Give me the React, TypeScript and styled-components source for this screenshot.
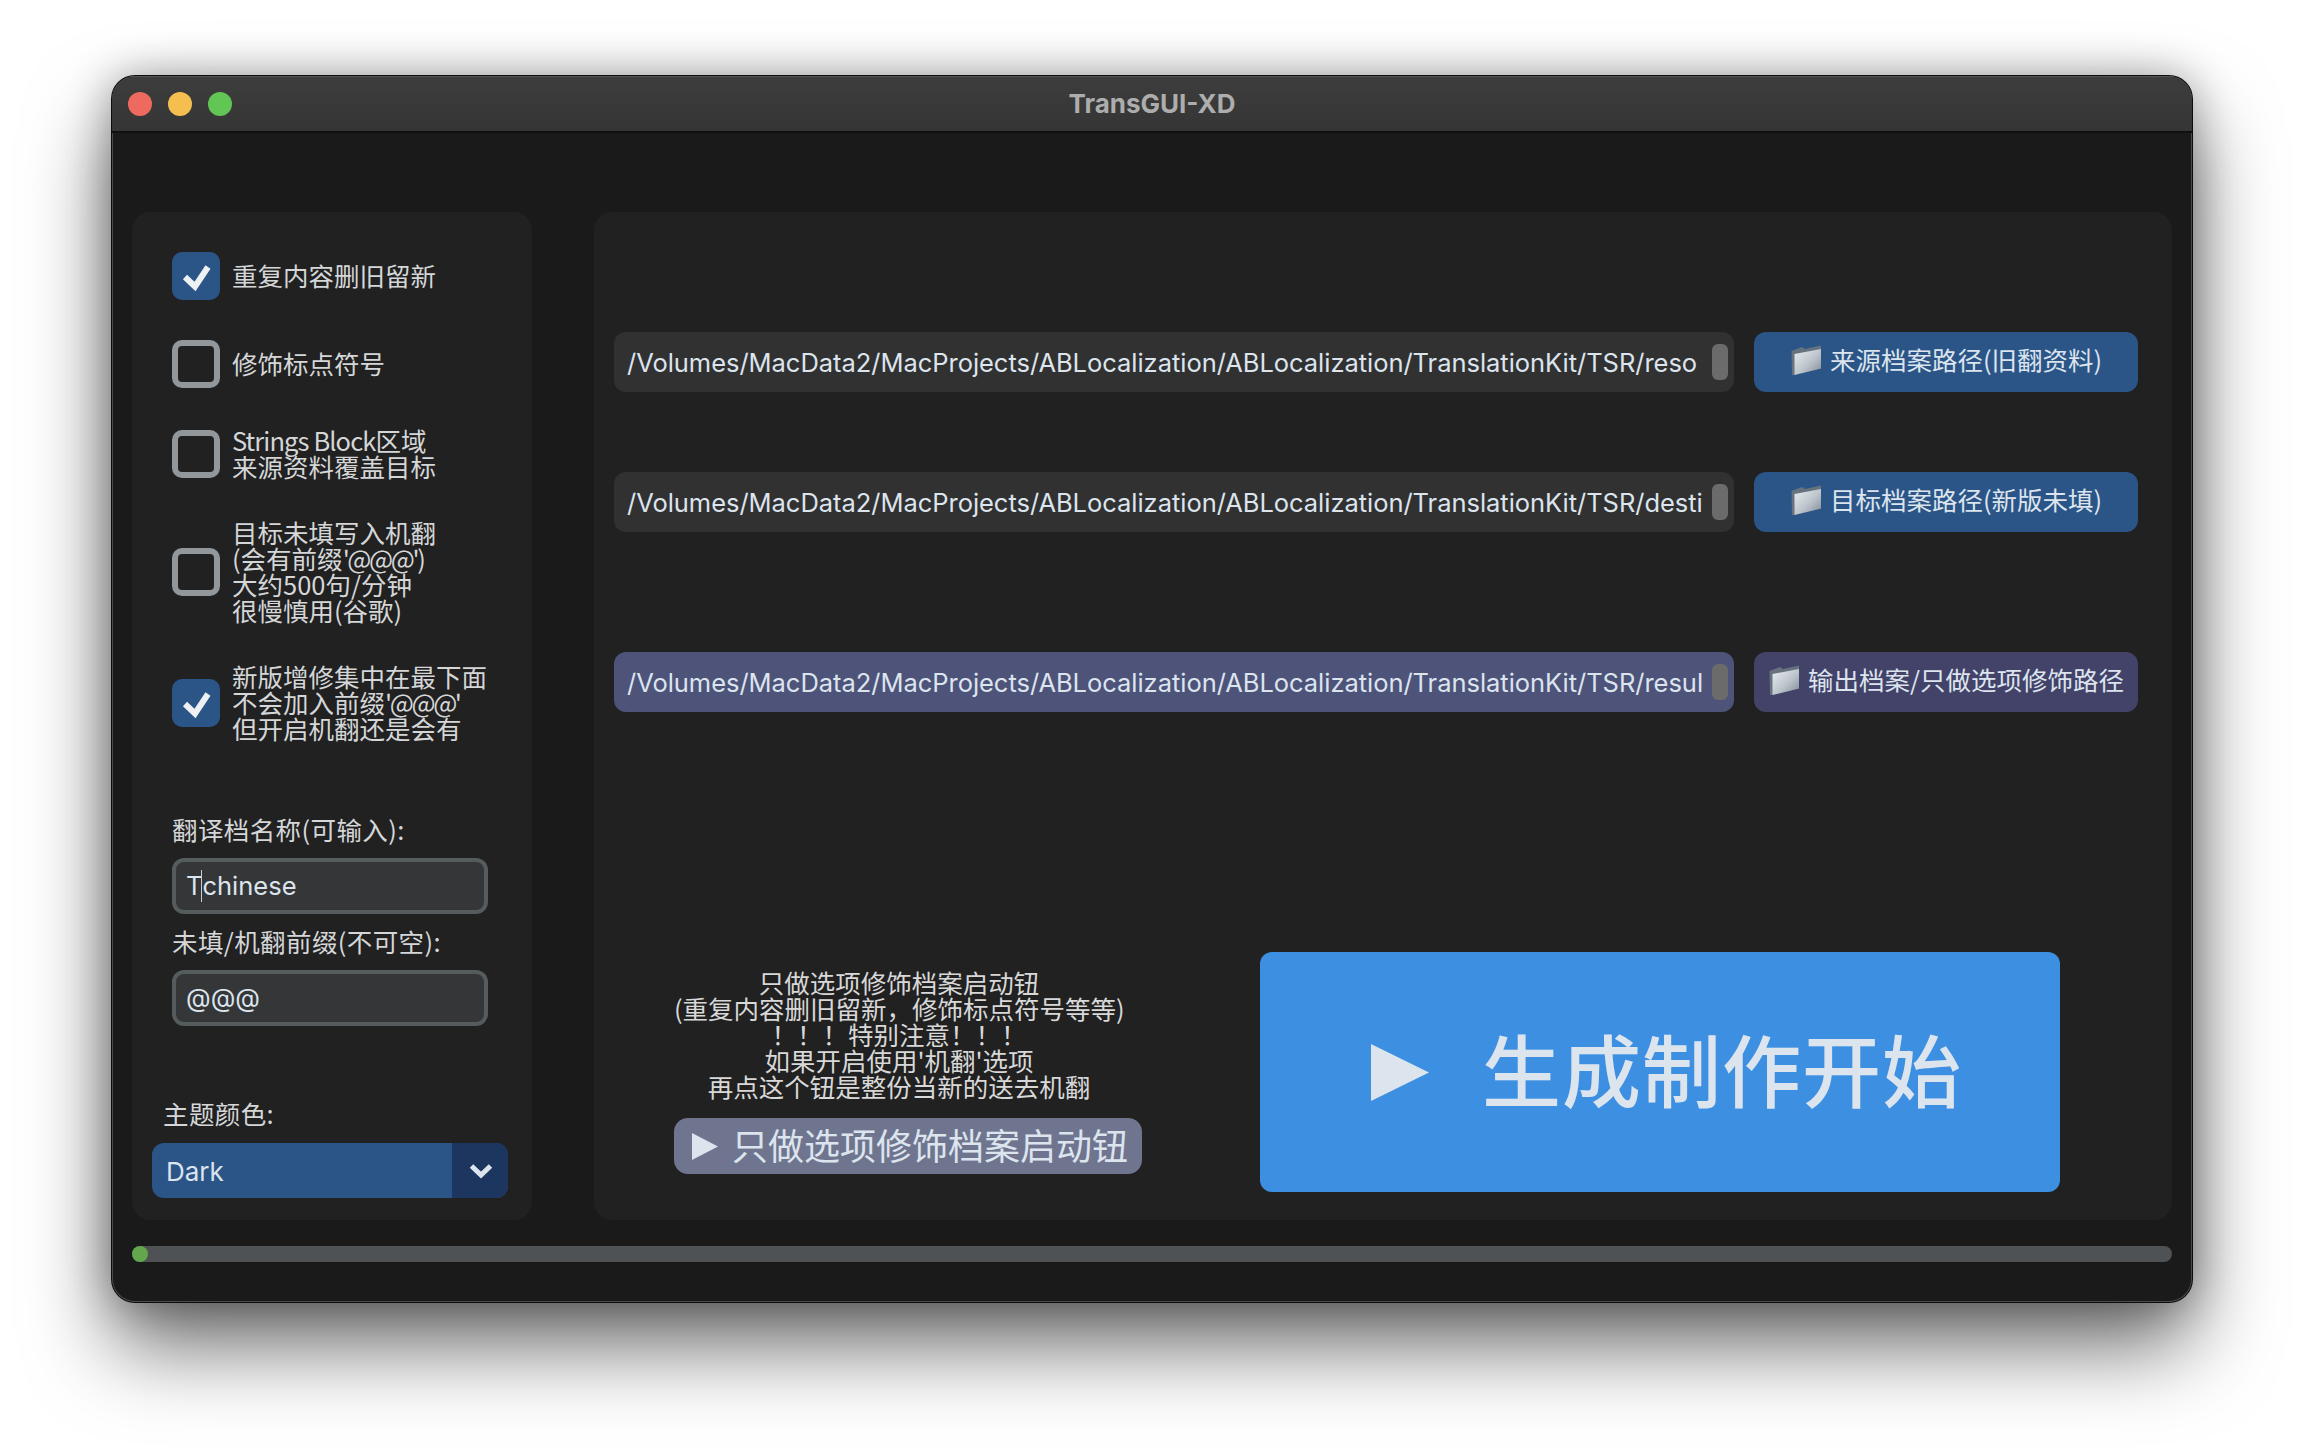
import React from "react";
import styled, { createGlobalStyle } from "styled-components";

const CJK = `"Noto Sans CJK SC", "Inter", sans-serif`;
const LATIN = `"Inter", "Noto Sans CJK SC", sans-serif`;

const GlobalStyle = createGlobalStyle`
  html, body {
    margin: 0;
    background: #ffffff;
  }
  * {
    box-sizing: border-box;
  }
`;

const Stage = styled.div`
  width: 2304px;
  height: 1450px;
  padding: 76px 112px 0;
  overflow: hidden;
  background: #ffffff;
`;

const Window = styled.div`
  width: 2080px;
  height: 1226px;
  border-radius: 23px;
  background: #1a1a1a;
  overflow: hidden;
  box-shadow: 0 0 0 1px #0c0c0c, inset 0 0 0 1px #4a4a4a, 0 44px 84px rgba(0, 0, 0, 0.58),
    0 0 44px rgba(0, 0, 0, 0.32);
`;

const TitleBar = styled.div`
  position: relative;
  height: 57px;
  padding-bottom: 2px;
  display: flex;
  align-items: center;
  justify-content: center;
  background: linear-gradient(#3c3d3c, #343534);
  border-top: 1px solid #555;
  border-bottom: 2px solid #0f0f0f;
`;

const Lights = styled.div`
  position: absolute;
  left: 16px;
  top: 15px;
  display: flex;
  gap: 16px;
`;

const Light = styled.span<{ $color: string }>`
  width: 24px;
  height: 24px;
  border-radius: 50%;
  background: ${(p) => p.$color};
`;

const Title = styled.div`
  font-family: ${LATIN};
  font-size: 26px;
  font-weight: 700;
  color: #adadad;
`;

const Body = styled.div`
  padding: 79px 20px 0;
`;

const Columns = styled.div`
  display: flex;
  gap: 62px;
  height: 1008px;
`;

const SidePanel = styled.div`
  width: 400px;
  flex: none;
  padding: 40px 24px 22px 20px;
  border-radius: 18px;
  background: #212121;
  display: flex;
  flex-direction: column;
`;

const Options = styled.div`
  display: flex;
  flex-direction: column;
  gap: 40px;
  padding-left: 20px;
`;

const Option = styled.div`
  display: flex;
  align-items: center;
  gap: 12px;
  min-height: 48px;
`;

const Box = styled.div<{ $checked?: boolean }>`
  width: 48px;
  height: 48px;
  flex: none;
  border-radius: 10px;
  background: ${(p) => (p.$checked ? "#2b5587" : "transparent")};
  border: ${(p) => (p.$checked ? "none" : "6px solid #92979c")};
`;

const OptionText = styled.div`
  margin: -1.5px 0 1.5px;
  font-family: ${CJK};
  font-size: 25.5px;
  line-height: 26px;
  color: #d4d6d8;
  white-space: nowrap;
`;

const Tight = styled.span<{ $spacing: number }>`
  letter-spacing: ${(p) => p.$spacing}px;
`;

const Fields = styled.div`
  display: flex;
  flex-direction: column;
  padding-left: 20px;
  margin-top: 74px;
`;

const FieldLabel = styled.div`
  font-family: ${CJK};
  font-size: 25.5px;
  line-height: 26px;
  letter-spacing: 0.4px;
  color: #d4d6d8;
  white-space: nowrap;
`;

const TextField = styled.div`
  width: 316px;
  height: 56px;
  margin: 16px 0 14px;
  padding: 0 10px 2px;
  display: flex;
  align-items: center;
  border: 4px solid #565b5e;
  border-radius: 12px;
  background: #343638;
  font-family: ${LATIN};
  font-size: 25.5px;
  color: #dce4ee;
`;

const Caret = styled.span`
  width: 1px;
  height: 32px;
  margin: 2px 0 0 -1px;
  background: #c9ced4;
`;

const ThemeLabel = styled(FieldLabel)`
  margin: 60px 0 17px 11px;
`;

const Dropdown = styled.div`
  width: 356px;
  height: 56px;
  display: flex;
  border-radius: 12px;
  overflow: hidden;
  background: #2b5587;
`;

const DropdownValue = styled.div`
  flex: 1;
  padding: 2px 0 0 14px;
  display: flex;
  align-items: center;
  font-family: ${LATIN};
  font-size: 26px;
  color: #dce4ee;
`;

const DropdownArrow = styled.div`
  width: 56px;
  display: flex;
  align-items: center;
  justify-content: center;
  padding-left: 2px;
  background: #1c3660;
`;

const MainPanel = styled.div`
  flex: 1;
  padding: 120px 34px 28px 20px;
  border-radius: 18px;
  background: #212121;
  display: flex;
  flex-direction: column;
`;

const PathRow = styled.div<{ $gap: number }>`
  display: flex;
  gap: 20px;
  margin-bottom: ${(p) => p.$gap}px;
`;

const PathField = styled.div<{ $active?: boolean }>`
  width: 1120px;
  height: 60px;
  padding: 0 6px 0 13px;
  display: flex;
  align-items: center;
  gap: 6px;
  border-radius: 12px;
  background: ${(p) => (p.$active ? "#4d5379" : "#313131")};
`;

const PathText = styled.div`
  flex: 1;
  white-space: nowrap;
  font-family: ${LATIN};
  font-size: 25.5px;
  letter-spacing: -0.035px;
  color: #dce4ee;
`;

const Thumb = styled.div`
  width: 16px;
  height: 36px;
  flex: none;
  border-radius: 6px;
  background: #6b6b6b;
`;

const PathButton = styled.div<{ $active?: boolean }>`
  width: 384px;
  height: 60px;
  display: flex;
  align-items: center;
  justify-content: center;
  gap: 8px;
  border-radius: 12px;
  background: ${(p) => (p.$active ? "#434268" : "#2b5587")};
  font-family: ${CJK};
  font-size: 25.5px;
  color: #dce4ee;
  white-space: nowrap;
`;

const PathButtonLabel = styled.span`
  margin-top: -7px;
`;

const Footer = styled.div`
  margin-top: auto;
  display: flex;
  align-items: flex-end;
  gap: 118px;
  padding-left: 60px;
`;

const QuickColumn = styled.div`
  width: 468px;
  padding-bottom: 18px;
  display: flex;
  flex-direction: column;
  gap: 19px;
`;

const Hint = styled.div`
  width: 450px;
  text-align: center;
  font-family: ${CJK};
  font-size: 25.5px;
  line-height: 26px;
  color: #d8d8d8;
  white-space: nowrap;
`;

const QuickButton = styled.div`
  height: 56px;
  display: flex;
  align-items: center;
  justify-content: center;
  gap: 14px;
  padding-left: 4px;
  border-radius: 14px;
  background: #70758f;
  font-family: ${CJK};
  font-size: 36px;
  color: #dce4ee;
  white-space: nowrap;
`;

const QuickLabel = styled.span`
  margin-top: -5px;
`;

const StartButton = styled.div`
  width: 800px;
  height: 240px;
  display: flex;
  align-items: center;
  justify-content: center;
  gap: 53px;
  padding-left: 13px;
  border-radius: 12px;
  background: #3d8fe2;
  font-family: ${CJK};
  font-size: 79px;
  font-weight: 500;
  letter-spacing: 1px;
  color: #dce4ee;
  white-space: nowrap;
`;

const StartLabel = styled.span`
  margin-top: -9px;
`;

const Progress = styled.div`
  height: 16px;
  margin-top: 26px;
  border-radius: 8px;
  background: #4f5255;
`;

const ProgressDot = styled.div`
  width: 16px;
  height: 16px;
  border-radius: 50%;
  background: #63a74c;
`;

function CheckIcon() {
  return (
    <svg width="36" height="36" viewBox="0 0 36 36" style={{ margin: 6, display: "block" }}>
      <path d="M7 19 L17 28.5 L30 9" fill="none" stroke="#eef1f4" strokeWidth="6" strokeLinejoin="miter" />
    </svg>
  );
}

function Check({ checked }: { checked?: boolean }) {
  return <Box $checked={checked}>{checked && <CheckIcon />}</Box>;
}

function FolderIcon({ id }: { id: string }) {
  return (
    <svg width="32" height="32" viewBox="0 0 32 32" style={{ flex: "none", marginTop: -4 }}>
      <defs>
        <linearGradient id={id} x1="0" y1="0" x2="1" y2="1">
          <stop offset="0" stopColor="#e9edf1" />
          <stop offset="0.55" stopColor="#bcc4cb" />
          <stop offset="1" stopColor="#7f8a95" />
        </linearGradient>
      </defs>
      <path d="M1.5 7 L2 31 L4 31 L31 24.5 L31 1.5 L15 5 L12 3 Z" fill="#66727d" />
      <path d="M4.5 10 L31 5 L31 24.5 L4.5 31 Z" fill={`url(#${id})`} />
    </svg>
  );
}

function Triangle({ width, height }: { width: number; height: number }) {
  return (
    <svg width={width} height={height} viewBox="0 0 10 10" preserveAspectRatio="none" style={{ flex: "none" }}>
      <polygon points="0,0 10,5 0,10" fill="#dce4ee" />
    </svg>
  );
}

const BASE = "/Volumes/MacData2/MacProjects/ABLocalization/ABLocalization/TranslationKit/TSR/";

export default function App() {
  return (
    <>
      <GlobalStyle />
      <Stage>
        <Window>
          <TitleBar>
            <Lights>
              <Light $color="#ee6a5f" />
              <Light $color="#f5bf4f" />
              <Light $color="#62c655" />
            </Lights>
            <Title>TransGUI-XD</Title>
          </TitleBar>
          <Body>
            <Columns>
              <SidePanel>
                <Options>
                  <Option>
                    <Check checked />
                    <OptionText>重复内容删旧留新</OptionText>
                  </Option>
                  <Option>
                    <Check />
                    <OptionText>修饰标点符号</OptionText>
                  </Option>
                  <Option>
                    <Check />
                    <OptionText>
                      <Tight $spacing={-0.9}>Strings Block</Tight>区域
                      <br />
                      来源资料覆盖目标
                    </OptionText>
                  </Option>
                  <Option>
                    <Check />
                    <OptionText>
                      目标未填写入机翻
                      <br />
                      (会有前缀<Tight $spacing={-2.4}>'@@@'</Tight>)
                      <br />
                      大约500句/分钟
                      <br />
                      很慢慎用(谷歌)
                    </OptionText>
                  </Option>
                  <Option>
                    <Check checked />
                    <OptionText>
                      新版增修集中在最下面
                      <br />
                      不会加入前缀<Tight $spacing={-2.4}>'@@@'</Tight>
                      <br />
                      但开启机翻还是会有
                    </OptionText>
                  </Option>
                </Options>
                <Fields>
                  <FieldLabel>翻译档名称(可输入):</FieldLabel>
                  <TextField>
                    T<Caret />
                    chinese
                  </TextField>
                  <FieldLabel>未填/机翻前缀(不可空):</FieldLabel>
                  <TextField>@@@</TextField>
                </Fields>
                <ThemeLabel>主题颜色:</ThemeLabel>
                <Dropdown>
                  <DropdownValue>Dark</DropdownValue>
                  <DropdownArrow>
                    <svg width="26" height="18" viewBox="0 0 26 18">
                      <path d="M3.5 4 L13 13 L22.5 4" fill="none" stroke="#dce4ee" strokeWidth="5" />
                    </svg>
                  </DropdownArrow>
                </Dropdown>
              </SidePanel>
              <MainPanel>
                <PathRow $gap={80}>
                  <PathField>
                    <PathText>{BASE}reso</PathText>
                    <Thumb />
                  </PathField>
                  <PathButton>
                    <FolderIcon id="folderA" />
                    <PathButtonLabel>来源档案路径(旧翻资料)</PathButtonLabel>
                  </PathButton>
                </PathRow>
                <PathRow $gap={120}>
                  <PathField>
                    <PathText>{BASE}desti</PathText>
                    <Thumb />
                  </PathField>
                  <PathButton>
                    <FolderIcon id="folderB" />
                    <PathButtonLabel>目标档案路径(新版未填)</PathButtonLabel>
                  </PathButton>
                </PathRow>
                <PathRow $gap={0}>
                  <PathField $active>
                    <PathText>{BASE}resul</PathText>
                    <Thumb />
                  </PathField>
                  <PathButton $active>
                    <FolderIcon id="folderC" />
                    <PathButtonLabel>输出档案/只做选项修饰路径</PathButtonLabel>
                  </PathButton>
                </PathRow>
                <Footer>
                  <QuickColumn>
                    <Hint>
                      只做选项修饰档案启动钮
                      <br />
                      (重复内容删旧留新，修饰标点符号等等)
                      <br />
                      ！！！特别注意！！！
                      <br />
                      如果开启使用'机翻'选项
                      <br />
                      再点这个钮是整份当新的送去机翻
                    </Hint>
                    <QuickButton>
                      <Triangle width={26} height={27} />
                      <QuickLabel>只做选项修饰档案启动钮</QuickLabel>
                    </QuickButton>
                  </QuickColumn>
                  <StartButton>
                    <Triangle width={58} height={57} />
                    <StartLabel>生成制作开始</StartLabel>
                  </StartButton>
                </Footer>
              </MainPanel>
            </Columns>
            <Progress>
              <ProgressDot />
            </Progress>
          </Body>
        </Window>
      </Stage>
    </>
  );
}
